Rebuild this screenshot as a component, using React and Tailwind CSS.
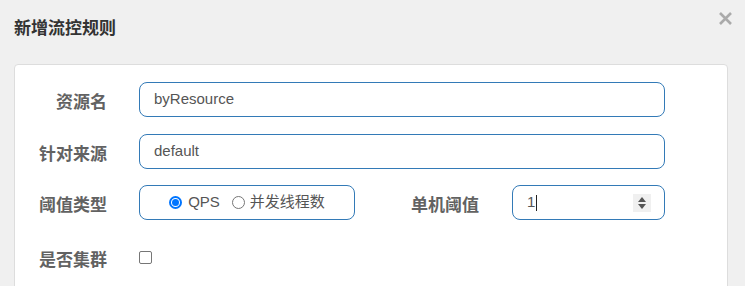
import React from "react";

const FONT = { fontFamily: '"Liberation Sans", "Noto Sans CJK SC", sans-serif' };

function Label({ children, className = "" }) {
  return (
    <div className={"shrink-0 text-right text-[17px] font-bold text-[#626262] pt-[6px] leading-[24px] " + className}>
      {children}
    </div>
  );
}

function TextBox({ value }) {
  return (
    <div className="w-[526px] h-[35px] border border-[#337ab7] rounded-[8px] flex items-center pl-[14px] text-[15px] text-[#555]">
      {value}
    </div>
  );
}

function Radio({ checked }) {
  return checked ? (
    <div className="w-[13px] h-[13px] rounded-full border-[2px] border-[#0075ff] flex items-center justify-center">
      <div className="w-[7px] h-[7px] rounded-full bg-[#0075ff]" />
    </div>
  ) : (
    <div className="w-[13px] h-[13px] rounded-full border border-[#767676] bg-white" />
  );
}

export default function App() {
  return (
    <div className="w-[745px] h-[286px] overflow-hidden bg-[#f0f0f0] relative" style={FONT}>
      <div className="h-[64px] flex items-center justify-between pl-[14px] pr-[12px] pb-[6px]">
        <div className="text-[17px] font-bold text-[#333]">新增流控规则</div>
        <div className="-mt-[22px]">
          <svg width="15" height="15" viewBox="0 0 15 15">
            <path d="M2 2 L13 13 M13 2 L2 13" stroke="#aaa" strokeWidth="2.6" strokeLinecap="butt" />
          </svg>
        </div>
      </div>
      <div className="ml-[14px] w-[714px] h-[240px] bg-white border border-[#ddd] rounded-[4px] pt-[17px]">
        <div className="flex flex-col">
          <div className="flex items-center h-[35px]">
            <Label className="w-[92px]">资源名</Label>
            <div className="ml-[32px]">
              <TextBox value="byResource" />
            </div>
          </div>
          <div className="flex items-center h-[35px] mt-[17px]">
            <Label className="w-[92px]">针对来源</Label>
            <div className="ml-[32px]">
              <TextBox value="default" />
            </div>
          </div>
          <div className="flex items-center h-[35px] mt-[16px]">
            <Label className="w-[92px]">阈值类型</Label>
            <div className="ml-[32px] w-[216px] h-[35px] border border-[#337ab7] rounded-[8px] flex items-center justify-center text-[15px] text-[#555]">
              <Radio checked />
              <span className="ml-[6px]">QPS</span>
              <span className="ml-[12px]"><Radio /></span>
              <span className="ml-[5px]">并发线程数</span>
            </div>
            <Label className="w-[124px]">单机阈值</Label>
            <div className="ml-[33px] w-[153px] h-[35px] border border-[#337ab7] rounded-[8px] flex items-center pl-[14px] pr-[13px] text-[15px] text-[#555]">
              <span>1</span>
              <span className="ml-[1px] w-[1px] h-[16px] bg-[#222]" />
              <div className="ml-auto w-[18px] h-[18px] bg-[#f0f0f0] flex flex-col items-center justify-center gap-[2px]">
                <svg width="8" height="5" viewBox="0 0 8 5"><path d="M0 5 L4 0 L8 5 Z" fill="#555" /></svg>
                <svg width="8" height="5" viewBox="0 0 8 5"><path d="M0 0 L4 5 L8 0 Z" fill="#555" /></svg>
              </div>
            </div>
          </div>
          <div className="flex items-center h-[35px] mt-[20px]">
            <Label className="w-[92px]">是否集群</Label>
            <div className="ml-[32px] w-[13px] h-[13px] border border-[#767676] rounded-[2px] bg-white" />
          </div>
        </div>
      </div>
    </div>
  );
}
